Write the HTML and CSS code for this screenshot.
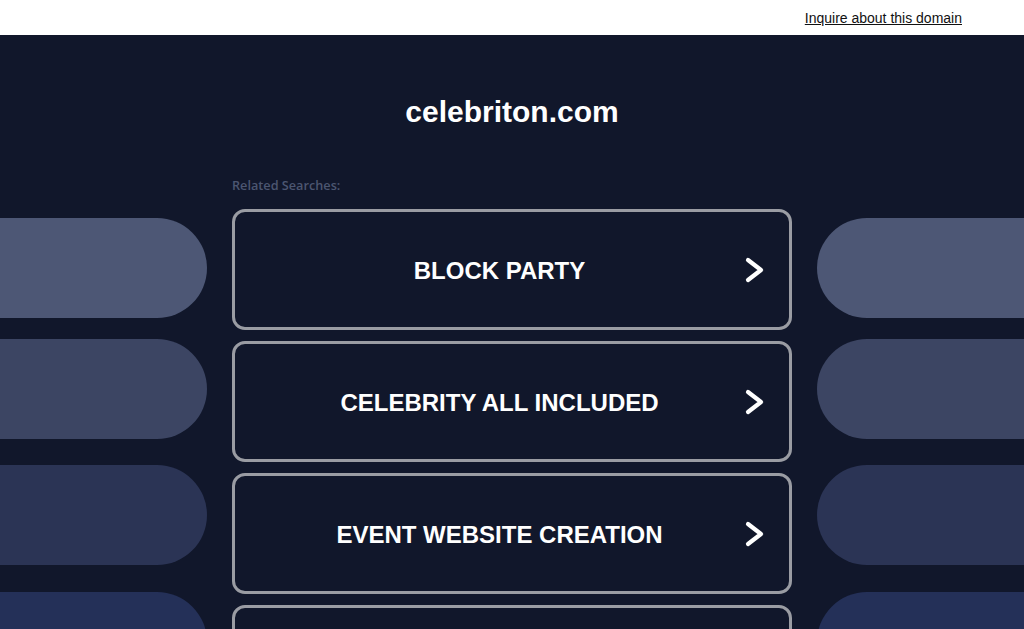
FILE: index.html
```html
<!DOCTYPE html>
<html lang="en">
<head>
<meta charset="utf-8">
<title>celebriton.com</title>
<link rel="stylesheet" href="styles.css">
</head>
<body>
<header class="topbar">
  <a class="inquire" href="#">Inquire about this domain</a>
</header>
<main class="main">
  <h1 class="domain">celebriton.com</h1>
  <div class="layout">
    <div class="side side-left">
      <div class="pill p1"></div>
      <div class="pill p2"></div>
      <div class="pill p3"></div>
      <div class="pill p4"></div>
    </div>
    <div class="center">
      <div class="related">Related Searches:</div>
      <a class="result" href="#"><span class="label">BLOCK PARTY</span><svg class="chev" viewBox="0 0 20 26" width="20" height="26"><path d="M3 3 L16 13 L3 23" fill="none" stroke="#fff" stroke-width="4.2" stroke-linecap="round" stroke-linejoin="round"/></svg></a>
      <a class="result" href="#"><span class="label">CELEBRITY ALL INCLUDED</span><svg class="chev" viewBox="0 0 20 26" width="20" height="26"><path d="M3 3 L16 13 L3 23" fill="none" stroke="#fff" stroke-width="4.2" stroke-linecap="round" stroke-linejoin="round"/></svg></a>
      <a class="result" href="#"><span class="label">EVENT WEBSITE CREATION</span><svg class="chev" viewBox="0 0 20 26" width="20" height="26"><path d="M3 3 L16 13 L3 23" fill="none" stroke="#fff" stroke-width="4.2" stroke-linecap="round" stroke-linejoin="round"/></svg></a>
      <a class="result" href="#"><span class="label">EVENT PLANNING</span><svg class="chev" viewBox="0 0 20 26" width="20" height="26"><path d="M3 3 L16 13 L3 23" fill="none" stroke="#fff" stroke-width="4.2" stroke-linecap="round" stroke-linejoin="round"/></svg></a>
    </div>
    <div class="side side-right">
      <div class="pill p1"></div>
      <div class="pill p2"></div>
      <div class="pill p3"></div>
      <div class="pill p4"></div>
    </div>
  </div>
</main>
</body>
</html>
```
FILE: styles.css
```css
* { box-sizing: border-box; }
html, body { margin: 0; padding: 0; }
body {
  background: #11172b;
  font-family: "Liberation Sans", Arial, sans-serif;
  height: 629px;
  overflow: hidden;
}
.topbar {
  background: #fff;
  height: 35px;
  display: flex;
  justify-content: flex-end;
  align-items: center;
  padding-right: 62px;
}
.inquire {
  color: #111;
  font-size: 14px;
  text-decoration: underline;
  padding-top: 1px;
}
.main {
  display: flex;
  flex-direction: column;
  align-items: center;
}
.domain {
  margin: 0;
  padding-top: 59px;
  color: #fff;
  font-size: 30px;
  font-weight: 700;
  line-height: 36px;
  height: 138px;
}
.layout {
  display: grid;
  grid-template-columns: 207px 560px 207px;
  column-gap: 25px;
  width: 1024px;
}
.side {
  display: flex;
  flex-direction: column;
  padding-top: 45px;
}
.pill {
  height: 100px;
  flex-shrink: 0;
}
.side-left .pill { border-radius: 0 50px 50px 0; }
.side-right .pill { border-radius: 50px 0 0 50px; }
.p1 { background: #4d5775; }
.p2 { background: #3c4563; margin-top: 21px; }
.p3 { background: #2b3455; margin-top: 26px; }
.p4 { background: #243058; margin-top: 27px; }
.center {
  display: flex;
  flex-direction: column;
}
.related {
  color: #4c5671;
  font-family: "Open Sans", "Noto Sans", sans-serif;
  font-size: 12.7px;
  font-weight: 600;
  line-height: 16px;
  height: 36px;
  padding-top: 4px;
}
.result {
  display: flex;
  align-items: center;
  justify-content: center;
  position: relative;
  height: 121px;
  border: 3px solid #9a9ca3;
  border-radius: 13px;
  margin-bottom: 11px;
  text-decoration: none;
  flex-shrink: 0;
}
.label {
  color: #fff;
  font-size: 24px;
  font-weight: 700;
  margin-right: 25px;
  padding-top: 2px;
}
.chev {
  position: absolute;
  right: 24px;
  top: 50%;
  margin-top: -13px;
}
```
